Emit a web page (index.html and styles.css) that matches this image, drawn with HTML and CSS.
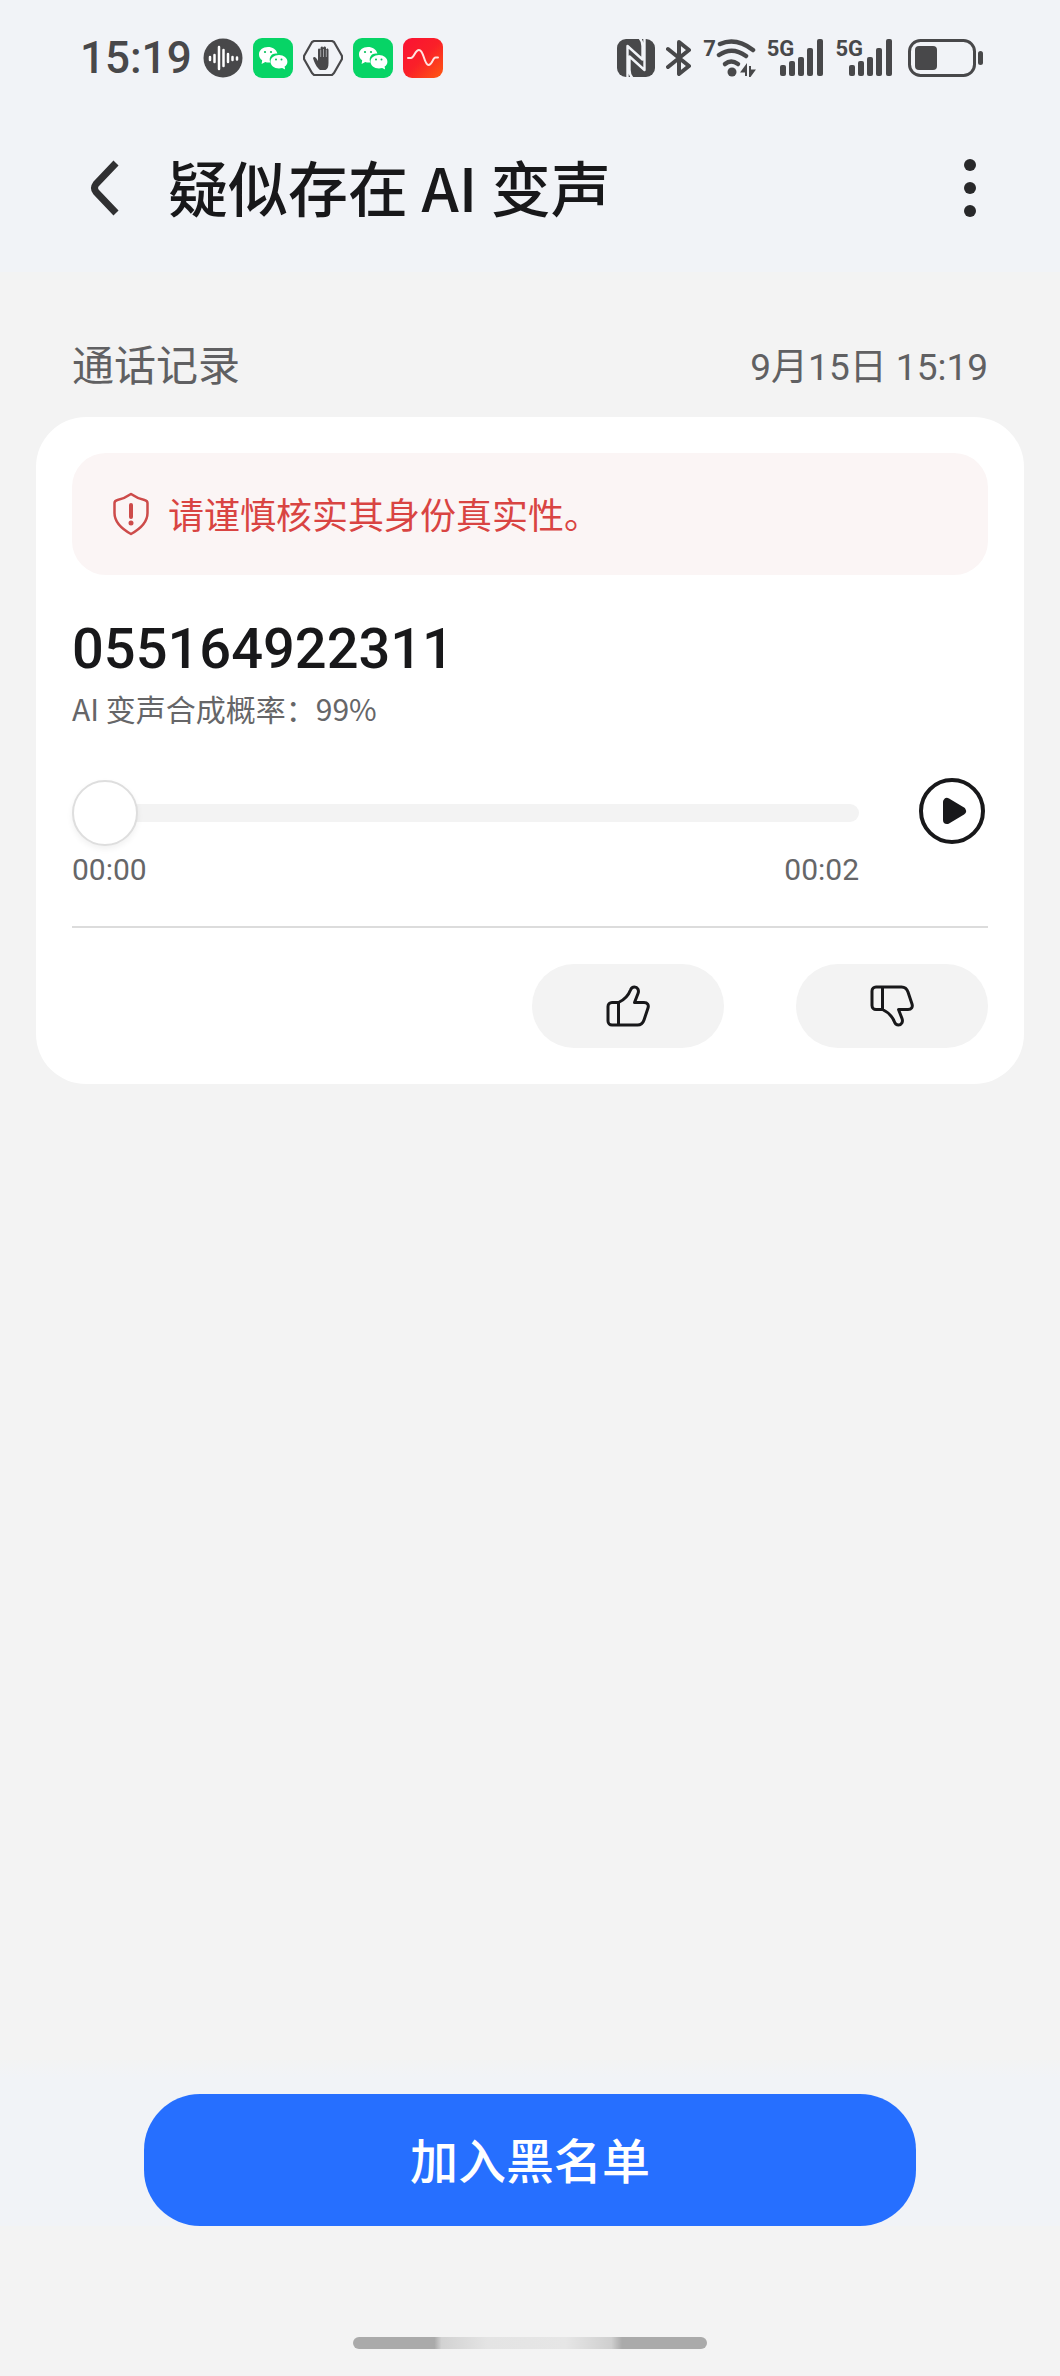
FILE: index.html
```html
<!DOCTYPE html>
<html lang="zh-CN">
<head>
<meta charset="utf-8">
<meta name="viewport" content="width=device-width, initial-scale=1">
<title>疑似存在 AI 变声</title>
<link rel="stylesheet" href="styles.css">
</head>
<body>
<svg class="defs" aria-hidden="true">
  <defs>
    <symbol id="chat" viewBox="0 0 40 40">
      <rect width="40" height="40" rx="9" fill="#07d466"/>
      <path d="M15 9C9.800 9 6 12.200 6 16.400c0 2.500 1.200 4.500 3.200 5.900L8.600 26l3.700-2c1.600.5 3.200.6 5 .4C15 18 20 14.500 24.400 15.600 23.500 11.500 19.500 9 15 9z" fill="#fff"/>
      <path d="M26 17c-4.900 0-8.500 3-8.500 6.700s3.600 6.700 8.500 6.700c1.100 0 2.100-.2 3.100-.5l3 1.600-.5-2.900c1.800-1.200 2.800-2.900 2.800-4.900C34.400 20 30.800 17 26 17z" fill="#fff"/>
      <g fill="#07c05c"><circle cx="12" cy="14" r="1.100"/><circle cx="18" cy="14" r="1.100"/><circle cx="23" cy="21.500" r="1"/><circle cx="28.500" cy="21.500" r="1"/></g>
    </symbol>
    <symbol id="signal" viewBox="0 0 44 38">
      <g fill="#48484a"><rect y="26" width="6" height="11" rx="2"/><rect x="9" y="22" width="6" height="15" rx="2"/><rect x="18" y="18" width="6" height="19" rx="2"/><rect x="27" y="9" width="6" height="28" rx="2"/><rect x="37" width="6" height="37" rx="2"/></g>
    </symbol>
    <symbol id="thumb" viewBox="0 0 44 42">
      <path d="M12.500 17.500H6A4 4 0 0 0 2 21.500V36a4 4 0 0 0 4 4h25.500c3.500 0 5.500-2 6.500-5l4-12c1-3-.5-5.500-4-5.500H28.500l3.500-9C33.300 5 31.500 2 28.500 2c-2 0-3.300 1-4 3-2.500 6.500-6.500 10-12 12.500zV40" fill="none" stroke="#18181a" stroke-width="3" stroke-linejoin="round"/>
    </symbol>
  </defs>
</svg>
<div class="screen">
  <div class="top">
    <div class="status">
      <div class="status-left">
        <span class="clock">15:19</span>
        <svg width="40" height="40" viewBox="0 0 40 40"><circle cx="20" cy="20" r="19.500" fill="#48484a"/><path d="M7 19v3M11.500 17v7M16 9v22M20.500 12v16M25 16v8M29.500 19v3M34 19.500v2" stroke="#fff" stroke-width="2.500" stroke-linecap="round"/></svg>
        <svg width="40" height="40"><use href="#chat"/></svg>
        <svg width="40" height="40" viewBox="0 0 40 40"><path d="M11 3h18l2 1 8 14v3l-8 14-2 2H11l-2-2-8-14v-3L9 4z" fill="none" stroke="#48484a" stroke-width="2.200" stroke-linejoin="round"/><path d="M17 32c-3-2-6-8-7-12 1-2 3-1 5 3V12c0-2 2-2 2.500 0v-2c.5-2 2.500-2 2.500 0 .5-2 3-2 3 0v2c.5-2 2.500-2 2.500 0v13c0 4-1 6-3 7z" fill="#48484a"/><path d="M17.700 12v7M20.500 11v8M23.300 12v7" stroke="#b9babc" stroke-width=".8"/></svg>
        <svg width="40" height="40"><use href="#chat"/></svg>
        <svg width="40" height="40" viewBox="0 0 40 40"><defs><linearGradient id="red" x1="0" y1="0" x2="1" y2="1"><stop offset="0" stop-color="#fa1234"/><stop offset=".5" stop-color="#fa2028"/><stop offset="1" stop-color="#ff5a12"/></linearGradient></defs><rect width="40" height="40" rx="9" fill="url(#red)"/><path d="M5 20h3c3 0 4-8 8-8 5 0 5 15 9.500 15 4 0 4-7.500 7-7.500H35" fill="none" stroke="#ffe3e0" stroke-width="2" stroke-linecap="round"/></svg>
      </div>
      <div class="status-right">
        <svg width="38" height="38" viewBox="0 0 38 38"><rect width="38" height="38" rx="9" fill="#48484a"/><path d="M10.500 38V7l15 13.500V7c0-4-1-6-3-8M27.500 0v31l-15-13.500V31c0 4 1 6 3 8" fill="none" stroke="#f1f3f7" stroke-width="2.400" stroke-linejoin="round"/></svg>
        <svg width="26" height="38" viewBox="0 0 26 38"><path d="M2 10l21 17-10 8V3l10 8L2 28" fill="none" stroke="#48484a" stroke-width="4" stroke-linejoin="round" stroke-linecap="round"/></svg>
        <span class="wifi">
          <span class="badge">7</span>
          <svg width="40" height="38" viewBox="1 0 40 38"><g fill="none" stroke="#48484a" stroke-width="4.500" stroke-linecap="round"><path d="M5 5q16-7 33 6"/><path d="M4 16q13-9 27 1"/><path d="M10 25q6-5 13 0"/></g><circle cx="17" cy="33" r="4.500" fill="#48484a"/><path d="M31 37V27l-4 5.500h4M35 27v10l4-5.500h-4" fill="#48484a" stroke="#48484a" stroke-width="2"/></svg>
        </span>
        <span class="cell"><span class="badge">5G</span><svg width="44" height="38"><use href="#signal"/></svg></span>
        <span class="cell"><span class="badge">5G</span><svg width="44" height="38"><use href="#signal"/></svg></span>
        <svg class="battery" width="76" height="38" viewBox="0 0 76 38"><rect x="1.500" y="1.500" width="65" height="35" rx="11" fill="none" stroke="#48484a" stroke-width="3"/><rect x="7" y="7" width="22" height="24" rx="4" fill="#48484a"/><rect x="70" y="12" width="5" height="14" rx="2.500" fill="#48484a"/></svg>
      </div>
    </div>
    <header class="header">
      <button class="icon-button" aria-label="返回"><svg width="30" height="56" viewBox="0 0 30 56"><path d="M26 3L6 24q-3 4 0 8l20 21" fill="none" stroke="#303032" stroke-width="7"/></svg></button>
      <h1>疑似存在 AI 变声</h1>
      <button class="icon-button" aria-label="更多"><svg width="36" height="60" viewBox="0 0 36 60"><g fill="#28282a"><circle cx="18" cy="7" r="6"/><circle cx="18" cy="30" r="6"/><circle cx="18" cy="53" r="6"/></g></svg></button>
    </header>
  </div>
  <main>
    <div class="section-head"><h2>通话记录</h2><time>9月15日 15:19</time></div>
    <section class="card">
      <p class="alert"><svg width="38" height="44" viewBox="0 0 38 44"><path d="M19 2c5 3.500 9 5 13.500 6 2 .5 3 1.500 3 3V21c0 10-7.500 16-16.500 21C10 37 2.500 31 2.500 21V11c0-1.500 1-2.500 3-3C10 7 14 5.500 19 2z" fill="none" stroke="#cd4b4a" stroke-width="2.500" stroke-linejoin="round"/><path d="M19 13v12" stroke="#cd4b4a" stroke-width="4" stroke-linecap="round"/><circle cx="19" cy="31" r="2.500" fill="#cd4b4a"/></svg><span>请谨慎核实其身份真实性。</span></p>
      <div class="number">055164922311</div>
      <p class="chance">AI 变声合成概率：99%</p>
      <div class="player">
        <div class="progress">
          <input type="range" min="0" max="2" value="0" aria-label="播放进度">
          <div class="times"><span>00:00</span><span>00:02</span></div>
        </div>
        <button class="icon-button play" aria-label="播放"><svg width="66" height="66" viewBox="0 0 66 66"><circle cx="33" cy="33" r="31" fill="none" stroke="#18181a" stroke-width="4"/><path d="M28 24v18l15-9z" fill="#18181a" stroke="#18181a" stroke-width="8" stroke-linejoin="round"/></svg></button>
      </div>
      <div class="votes">
        <button aria-label="赞"><svg width="44" height="42"><use href="#thumb"/></svg></button>
        <button aria-label="踩"><svg width="44" height="42"><use href="#thumb" transform="matrix(1 0 0 -1 0 42)"/></svg></button>
      </div>
    </section>
  </main>
  <footer>
    <div class="action"><button>加入黑名单</button></div>
    <div class="home"></div>
  </footer>
</div>
</body>
</html>
```
FILE: styles.css
```css
* { box-sizing: border-box; margin: 0; padding: 0; }
body {
  background: #f3f3f3;
  color: #18181a;
  font-family: Roboto, "Noto Sans CJK SC", sans-serif;
}
button { border: 0; background: none; font: inherit; color: inherit; cursor: pointer; }
svg { display: block; flex: none; }
.defs { position: absolute; width: 0; height: 0; }
.screen { min-height: 100vh; display: flex; flex-direction: column; }

.top { background: #f1f3f7; padding-bottom: 26px; }
.status {
  height: 116px;
  padding: 0 76px 0 80px;
  display: flex;
  align-items: center;
  justify-content: space-between;
  color: #48484a;
}
.status-left { display: flex; align-items: center; gap: 10px; }
.clock { font-size: 44px; font-weight: 500; margin-right: 1px; }
.status-right { display: flex; align-items: center; gap: 11px; }
.badge { font-size: 22px; line-height: 20px; font-weight: 700; }
.wifi, .cell { display: flex; align-items: flex-start; }
.cell .badge { margin-right: -14px; }
.battery { margin-left: 4px; }

.header {
  height: 130px;
  padding: 14px 72px 0 90px;
  display: flex;
  align-items: center;
  gap: 48px;
}
.header h1 {
  flex: 1;
  font: 500 60px/88px "Noto Sans CJK SC", sans-serif;
  padding-bottom: 4px;
}

main { flex: 1; padding: 60px 36px; }
.section-head {
  height: 85px;
  padding: 0 36px;
  display: flex;
  align-items: flex-start;
  justify-content: space-between;
  color: #606062;
}
.section-head h2 { font-size: 42px; line-height: 70px; font-weight: 400; }
.section-head time { font-size: 37px; line-height: 72px; }

.card { background: #fff; border-radius: 50px; padding: 36px; }
.alert {
  height: 122px;
  padding: 0 40px;
  border-radius: 34px;
  background: #fbf5f5;
  color: #d94442;
  display: flex;
  align-items: center;
  gap: 18px;
  font-size: 36px;
}
.alert span { padding-bottom: 3px; }
.number { margin-top: 38px; font-size: 56px; line-height: 72px; font-weight: 500; }
.chance { margin-top: 1px; font: 30px/44px "Noto Sans CJK SC", sans-serif; color: #666668; }
.player { margin-top: 48px; display: flex; align-items: flex-start; gap: 60px; padding-bottom: 34px; border-bottom: 2px solid #dcdcdc; }
.progress { flex: 1; }
.play { margin-right: 3px; }
input[type="range"] {
  display: block;
  width: 100%;
  height: 70px;
  appearance: none;
  background: transparent;
}
input[type="range"]::-webkit-slider-runnable-track {
  height: 18px;
  border-radius: 9px;
  background: #f3f3f3;
}
input[type="range"]::-webkit-slider-thumb {
  appearance: none;
  width: 66px;
  height: 66px;
  margin-top: -24px;
  border: 2px solid #dedede;
  border-radius: 50%;
  background: #fff;
  box-shadow: 0 3px 6px #0000000f;
}
.times { display: flex; justify-content: space-between; font-size: 30px; line-height: 44px; color: #666668; }
.votes { margin-top: 36px; display: flex; justify-content: flex-end; gap: 72px; }
.votes button {
  width: 192px;
  height: 84px;
  border-radius: 42px;
  background: #f3f3f3;
  display: flex;
  align-items: center;
  justify-content: center;
}

.action {
  padding: 36px 144px 0;
  background: linear-gradient(#f3f3f3, #f1f3f7 20px);
}
.action button {
  display: block;
  width: 100%;
  height: 132px;
  padding-bottom: 5px;
  border-radius: 56px;
  background: #266fff;
  color: #fff;
  font-size: 48px;
  font-weight: 500;
}
.home {
  width: 33.4%;
  height: 12px;
  margin: 111px auto 27px;
  border-radius: 6px;
  background: linear-gradient(90deg, #aaa 23%, #d2d2d2 25%, #e4e4e4 38%, #e6e6e6 60%, #cfcfcf 73%, #aaa 76%);
}
```
